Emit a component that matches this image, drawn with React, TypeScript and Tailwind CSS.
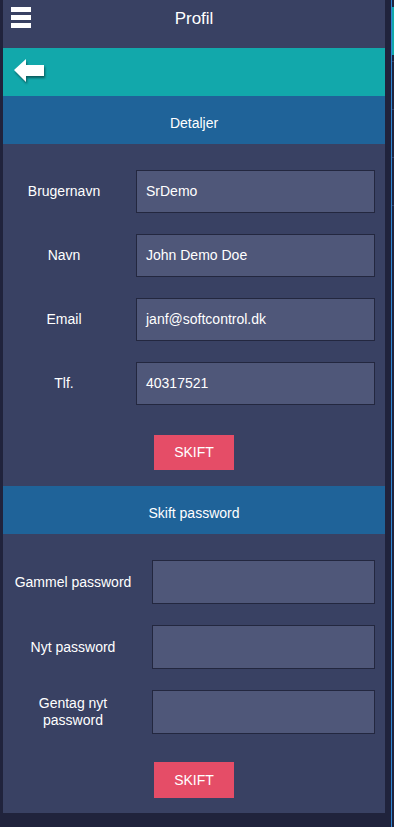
import React from 'react';

const FONT = { fontFamily: '"Liberation Sans", Arial, sans-serif' };

const BackArrow: React.FC = () => (
  <svg width="36" height="30" viewBox="0 0 36 30" className="drop-shadow-[1px_2px_1px_rgba(0,0,0,0.45)]">
    <polygon points="1,13 13,2 13,8 31,8 31,19 13,19 13,25" fill="#ffffff" />
  </svg>
);

const Row: React.FC<{ label: React.ReactNode; value?: string; labelW: string; inputCls: string; h: string }> = ({
  label,
  value,
  labelW,
  inputCls,
  h,
}) => (
  <div className="flex items-center">
    <div className={`${labelW} px-[10px] text-center text-[14px] leading-[17px] text-white`}>{label}</div>
    <div
      className={`${inputCls} ${h} flex items-center bg-[#4f5779] border border-[#23273f] px-[9px] text-[14px] text-white`}
    >
      {value}
    </div>
  </div>
);

const SectionHeader: React.FC<{ title: string }> = ({ title }) => (
  <div className="h-[48px] bg-[#1f6399] flex items-center justify-center text-[14px] text-white pt-[6px]">{title}</div>
);

const SkiftButton: React.FC<{ h: string }> = ({ h }) => (
  <div className="flex justify-center">
    <button className={`w-[80px] ${h} bg-[#e54d67] text-white text-[14px] uppercase`}>Skift</button>
  </div>
);

const App: React.FC = () => {
  const details = [
    { label: 'Brugernavn', value: 'SrDemo' },
    { label: 'Navn', value: 'John Demo Doe' },
    { label: 'Email', value: 'janf@softcontrol.dk' },
    { label: 'Tlf.', value: '40317521' },
  ];

  return (
    <div className="flex w-[394px] h-[827px] bg-[#20233c] overflow-hidden" style={FONT}>
      <div className="w-[3px] shrink-0" />
      <div className="w-[382px] shrink-0 h-[813px] bg-[#394163] flex flex-col">
        {/* top bar */}
        <div className="h-[48px] relative flex items-center justify-center">
          <div className="absolute left-[8px] top-[7px] flex flex-col gap-[3px]">
            <div className="w-[20px] h-[5px] bg-white" />
            <div className="w-[20px] h-[5px] bg-white" />
            <div className="w-[20px] h-[5px] bg-white" />
          </div>
          <span className="text-[17px] text-white -mt-[10px]">Profil</span>
        </div>

        <div className="h-[48px] bg-[#12a8ab] flex items-center pl-[10px]">
          <BackArrow />
        </div>

        <SectionHeader title="Detaljer" />

        <div className="flex flex-col gap-[21px] pt-[26px]">
          {details.map((d) => (
            <Row key={d.label} label={d.label} value={d.value} labelW="w-[122px]" inputCls="ml-[11px] w-[239px]" h="h-[43px]" />
          ))}
        </div>
        <div className="pt-[30px] pb-[16px]">
          <SkiftButton h="h-[35px]" />
        </div>

        <SectionHeader title="Skift password" />

        <div className="flex flex-col gap-[21px] pt-[26px]">
          <Row label="Gammel password" labelW="w-[140px]" inputCls="ml-[9px] w-[223px]" h="h-[44px]" />
          <Row label="Nyt password" labelW="w-[140px]" inputCls="ml-[9px] w-[223px]" h="h-[44px]" />
          <Row label="Gentag nyt password" labelW="w-[140px]" inputCls="ml-[9px] w-[223px]" h="h-[44px]" />
        </div>
        <div className="pt-[28px]">
          <SkiftButton h="h-[36px]" />
        </div>
      </div>

      {/* right edge of neighbouring window */}
      <div className="w-[6px] shrink-0" />
      <div className="w-[1px] shrink-0 bg-[#2f86d6]" />
      <div className="flex-1 flex flex-col">
        <div className="h-[7px]" />
        <div className="h-[48px] bg-[#12a8ab]" />
        <div className="h-[7px] border-b border-[#3a4163]" />
        <div className="h-[48px] border-b border-[#3a4163]" />
        <div className="h-[48px] border-b border-[#3a4163]" />
        <div className="h-[48px] border-b border-[#3a4163]" />
      </div>
    </div>
  );
};

export default App;
